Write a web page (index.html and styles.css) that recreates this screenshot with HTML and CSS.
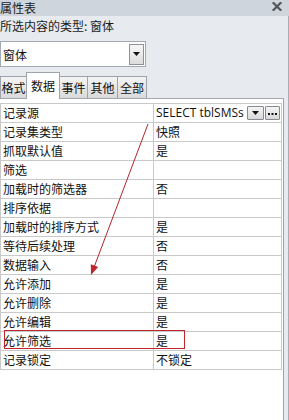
FILE: index.html
```html
<!DOCTYPE html>
<html lang="zh">
<head>
<meta charset="utf-8">
<title>属性表</title>
<link rel="stylesheet" href="styles.css">
</head>
<body>
<div class="titlebar">
  <span class="title">属性表</span>
  <svg class="close" width="10" height="9" viewBox="0 0 10 9"><path d="M1.5 1 L8.5 8 M8.5 1 L1.5 8" stroke="#505458" stroke-width="2.2" stroke-linecap="square"/></svg>
</div>
<div class="main">
  <div class="type-label">所选内容的类型: 窗体</div>
  <div class="combo">
    <span class="combo-text">窗体</span>
    <span class="combo-btn"><svg width="7" height="4" viewBox="0 0 7 4"><path d="M0 0 H7 L3.5 4 Z" fill="#111"/></svg></span>
  </div>
  <div class="tabs">
    <div class="tab t1">格式</div>
    <div class="tab t2 active">数据</div>
    <div class="tab t3">事件</div>
    <div class="tab t4">其他</div>
    <div class="tab t5">全部</div>
  </div>
  <div class="grid-wrap">
    <table class="grid">
      <tr><td class="lbl">记录源</td><td class="val"><div class="first"><span class="sql">SELECT tblSMSs</span><span class="vbtn dd"><svg width="7" height="4" viewBox="0 0 7 4"><path d="M0 0 H7 L3.5 4 Z" fill="#111"/></svg></span><span class="vbtn dots"><svg width="9" height="3" viewBox="0 0 9 3"><rect x="0" y="1" width="2" height="2" fill="#111"/><rect x="3.5" y="1" width="2" height="2" fill="#111"/><rect x="7" y="1" width="2" height="2" fill="#111"/></svg></span></div></td></tr>
      <tr><td class="lbl">记录集类型</td><td class="val">快照</td></tr>
      <tr><td class="lbl">抓取默认值</td><td class="val">是</td></tr>
      <tr><td class="lbl">筛选</td><td class="val"></td></tr>
      <tr><td class="lbl">加载时的筛选器</td><td class="val">否</td></tr>
      <tr><td class="lbl">排序依据</td><td class="val"></td></tr>
      <tr><td class="lbl">加载时的排序方式</td><td class="val">是</td></tr>
      <tr><td class="lbl">等待后续处理</td><td class="val">否</td></tr>
      <tr><td class="lbl">数据输入</td><td class="val">否</td></tr>
      <tr><td class="lbl">允许添加</td><td class="val">是</td></tr>
      <tr><td class="lbl">允许删除</td><td class="val">是</td></tr>
      <tr><td class="lbl">允许编辑</td><td class="val">是</td></tr>
      <tr><td class="lbl">允许筛选</td><td class="val">是</td></tr>
      <tr><td class="lbl">记录锁定</td><td class="val">不锁定</td></tr>
    </table>
  </div>
</div>
<svg class="annot" width="289" height="420" viewBox="0 0 289 420">
  <line x1="148" y1="124" x2="94.5" y2="266" stroke="#b4262c" stroke-width="1"/>
  <path d="M91 275 L98.2 267 L90.8 264.2 Z" fill="#c0272d"/>
  <rect x="4.5" y="330.5" width="180" height="18" fill="none" stroke="#c0272d" stroke-width="1"/>
</svg>
</body>
</html>
```
FILE: styles.css
```css
html, body {
  margin: 0;
  padding: 0;
}
body {
  width: 289px;
  height: 420px;
  overflow: hidden;
  position: relative;
  background: #e7eaef;
  font-family: "Noto Sans CJK SC", "Noto Sans", sans-serif;
  font-size: 12px;
  color: #111;
}
.titlebar {
  height: 16px;
  background: #cfd5dd;
  display: flex;
  align-items: center;
  justify-content: space-between;
  padding-right: 7px;
}
.title {
  line-height: 16px;
  color: #1b1b1b;
}
.close {
  display: block;
  margin-top: -3px;
}
.main {
  height: 404px;
  display: flex;
  flex-direction: column;
  border-right: 1px solid #a9adb3;
  box-sizing: border-box;
}
.type-label {
  height: 20px;
  line-height: 20px;
  margin-bottom: 5px;
  color: #1b1b1b;
}
.combo {
  width: 146px;
  height: 26px;
  box-sizing: border-box;
  border: 1px solid #a3a9b1;
  background: #fff;
  display: flex;
  align-items: center;
  padding: 0 1px 0 2px;
}
.combo-text {
  flex: 1;
}
.combo-btn {
  width: 15px;
  height: 21px;
  box-sizing: border-box;
  border: 1px solid #8d9399;
  background: linear-gradient(#f7f7f7, #dcdcdc);
  display: flex;
  align-items: center;
  justify-content: center;
}
.combo-btn svg, .vbtn svg {
  display: block;
}
.tabs {
  margin-top: 5px;
  height: 26px;
  display: flex;
  align-items: flex-end;
  position: relative;
  z-index: 1;
}
.tab {
  height: 22px;
  box-sizing: border-box;
  border: 1px solid #9ea4ac;
  border-bottom: none;
  background: linear-gradient(#f4f4f4, #dadada);
  text-align: center;
  line-height: 22px;
  margin-right: -1px;
}
.t1 { width: 27px; }
.t2 { width: 34px; }
.t3 { width: 29px; }
.t4 { width: 31px; }
.t5 { width: 30px; }
.tab.active {
  height: 27px;
  margin-bottom: -1px;
  background: #fff;
  line-height: 26px;
  position: relative;
  z-index: 2;
}
.grid-wrap {
  flex: 1;
  width: 284px;
  box-sizing: border-box;
  background: #fff;
  border-top: 1px solid #a1a7af;
  border-right: 1px solid #9ea3a9;
  padding-top: 4px;
}
.grid {
  width: 282px;
  border-collapse: collapse;
  table-layout: fixed;
}
.grid td {
  height: 18px;
  padding: 0 0 0 2px;
  border: 1px solid #c9c9c9;
  white-space: nowrap;
  overflow: hidden;
  line-height: 18px;
  box-sizing: border-box;
}
.grid td.lbl {
  width: 153px;
}
.first {
  display: flex;
  align-items: center;
  height: 18px;
  padding-right: 1px;
}
.sql {
  flex: 1;
  min-width: 0;
  overflow: hidden;
  font-family: "Open Sans", "Noto Sans", sans-serif;
  font-size: 12px;
  white-space: nowrap;
}
.vbtn {
  flex: none;
  height: 14px;
  box-sizing: border-box;
  border: 1px solid #858b91;
  background: linear-gradient(#f5f5f5, #d8d8d8);
  display: flex;
  align-items: center;
  justify-content: center;
  border-radius: 1px;
}
.vbtn.dd {
  width: 17px;
  margin-right: 1px;
}
.vbtn.dots {
  width: 15px;
}
.annot {
  position: absolute;
  left: 0;
  top: 0;
  pointer-events: none;
  z-index: 5;
}
```
